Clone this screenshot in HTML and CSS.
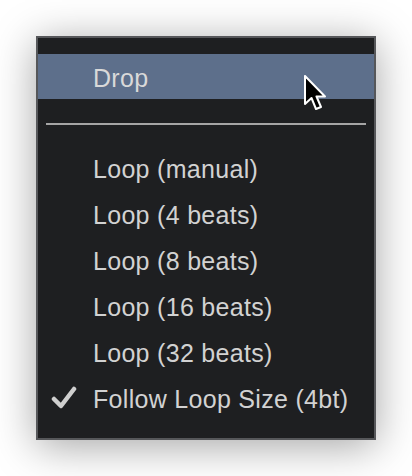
FILE: index.html
```html
<!DOCTYPE html>
<html>
<head>
<meta charset="utf-8">
<link rel="stylesheet" href="styles.css">
</head>
<body>
<div class="menu">
  <div class="item active">Drop
    <svg class="cursor" width="26" height="38" viewBox="0 0 26 38">
      <path d="M2 1 L2 29 L8.5 23 L13 34 L18 32 L13.5 21.5 L22 21.5 Z" fill="#000" stroke="#fff" stroke-width="2" stroke-linejoin="round"/>
    </svg>
  </div>
  <div class="sep"></div>
  <div class="item">Loop (manual)</div>
  <div class="item">Loop (4 beats)</div>
  <div class="item">Loop (8 beats)</div>
  <div class="item">Loop (16 beats)</div>
  <div class="item">Loop (32 beats)</div>
  <div class="item checked">
    <svg class="check" width="26" height="24" viewBox="0 0 26 24">
      <path d="M3 13 L10 20 L23 3" fill="none" stroke="#cfcfcf" stroke-width="4.5" stroke-linecap="round" stroke-linejoin="round"/>
    </svg>
    Follow Loop Size (4bt)</div>
</div>
</body>
</html>
```
FILE: styles.css
```css
html, body {
  margin: 0;
  padding: 0;
  background: #ffffff;
}
body {
  box-sizing: border-box;
  min-height: 476px;
  padding: 36px 0 36px 36px;
  font-family: "Liberation Sans", Arial, sans-serif;
}
.menu {
  box-sizing: border-box;
  width: 340px;
  height: 404px;
  background: #1e1f21;
  border: 2px solid #56575a;
  padding: 16px 0 17px 0;
  box-shadow: 0 6px 40px rgba(0, 0, 0, 0.36);
  display: flex;
  flex-direction: column;
}
.item {
  position: relative;
  height: 46px;
  line-height: 46px;
  padding-left: 55px;
  padding-top: 1px;
  box-sizing: border-box;
  font-size: 25px;
  letter-spacing: 0.3px;
  color: #d2d2d2;
  white-space: nowrap;
}
.item.active {
  height: 45px;
  background: #5d6f8b;
  color: #d9d9d9;
}
.sep {
  height: 2px;
  background: #a5a5a5;
  margin: 24px 8px 20px 8px;
  flex: none;
}
.cursor {
  position: absolute;
  left: 265px;
  top: 21px;
}
.check {
  position: absolute;
  left: 13px;
  top: 11px;
}
```
